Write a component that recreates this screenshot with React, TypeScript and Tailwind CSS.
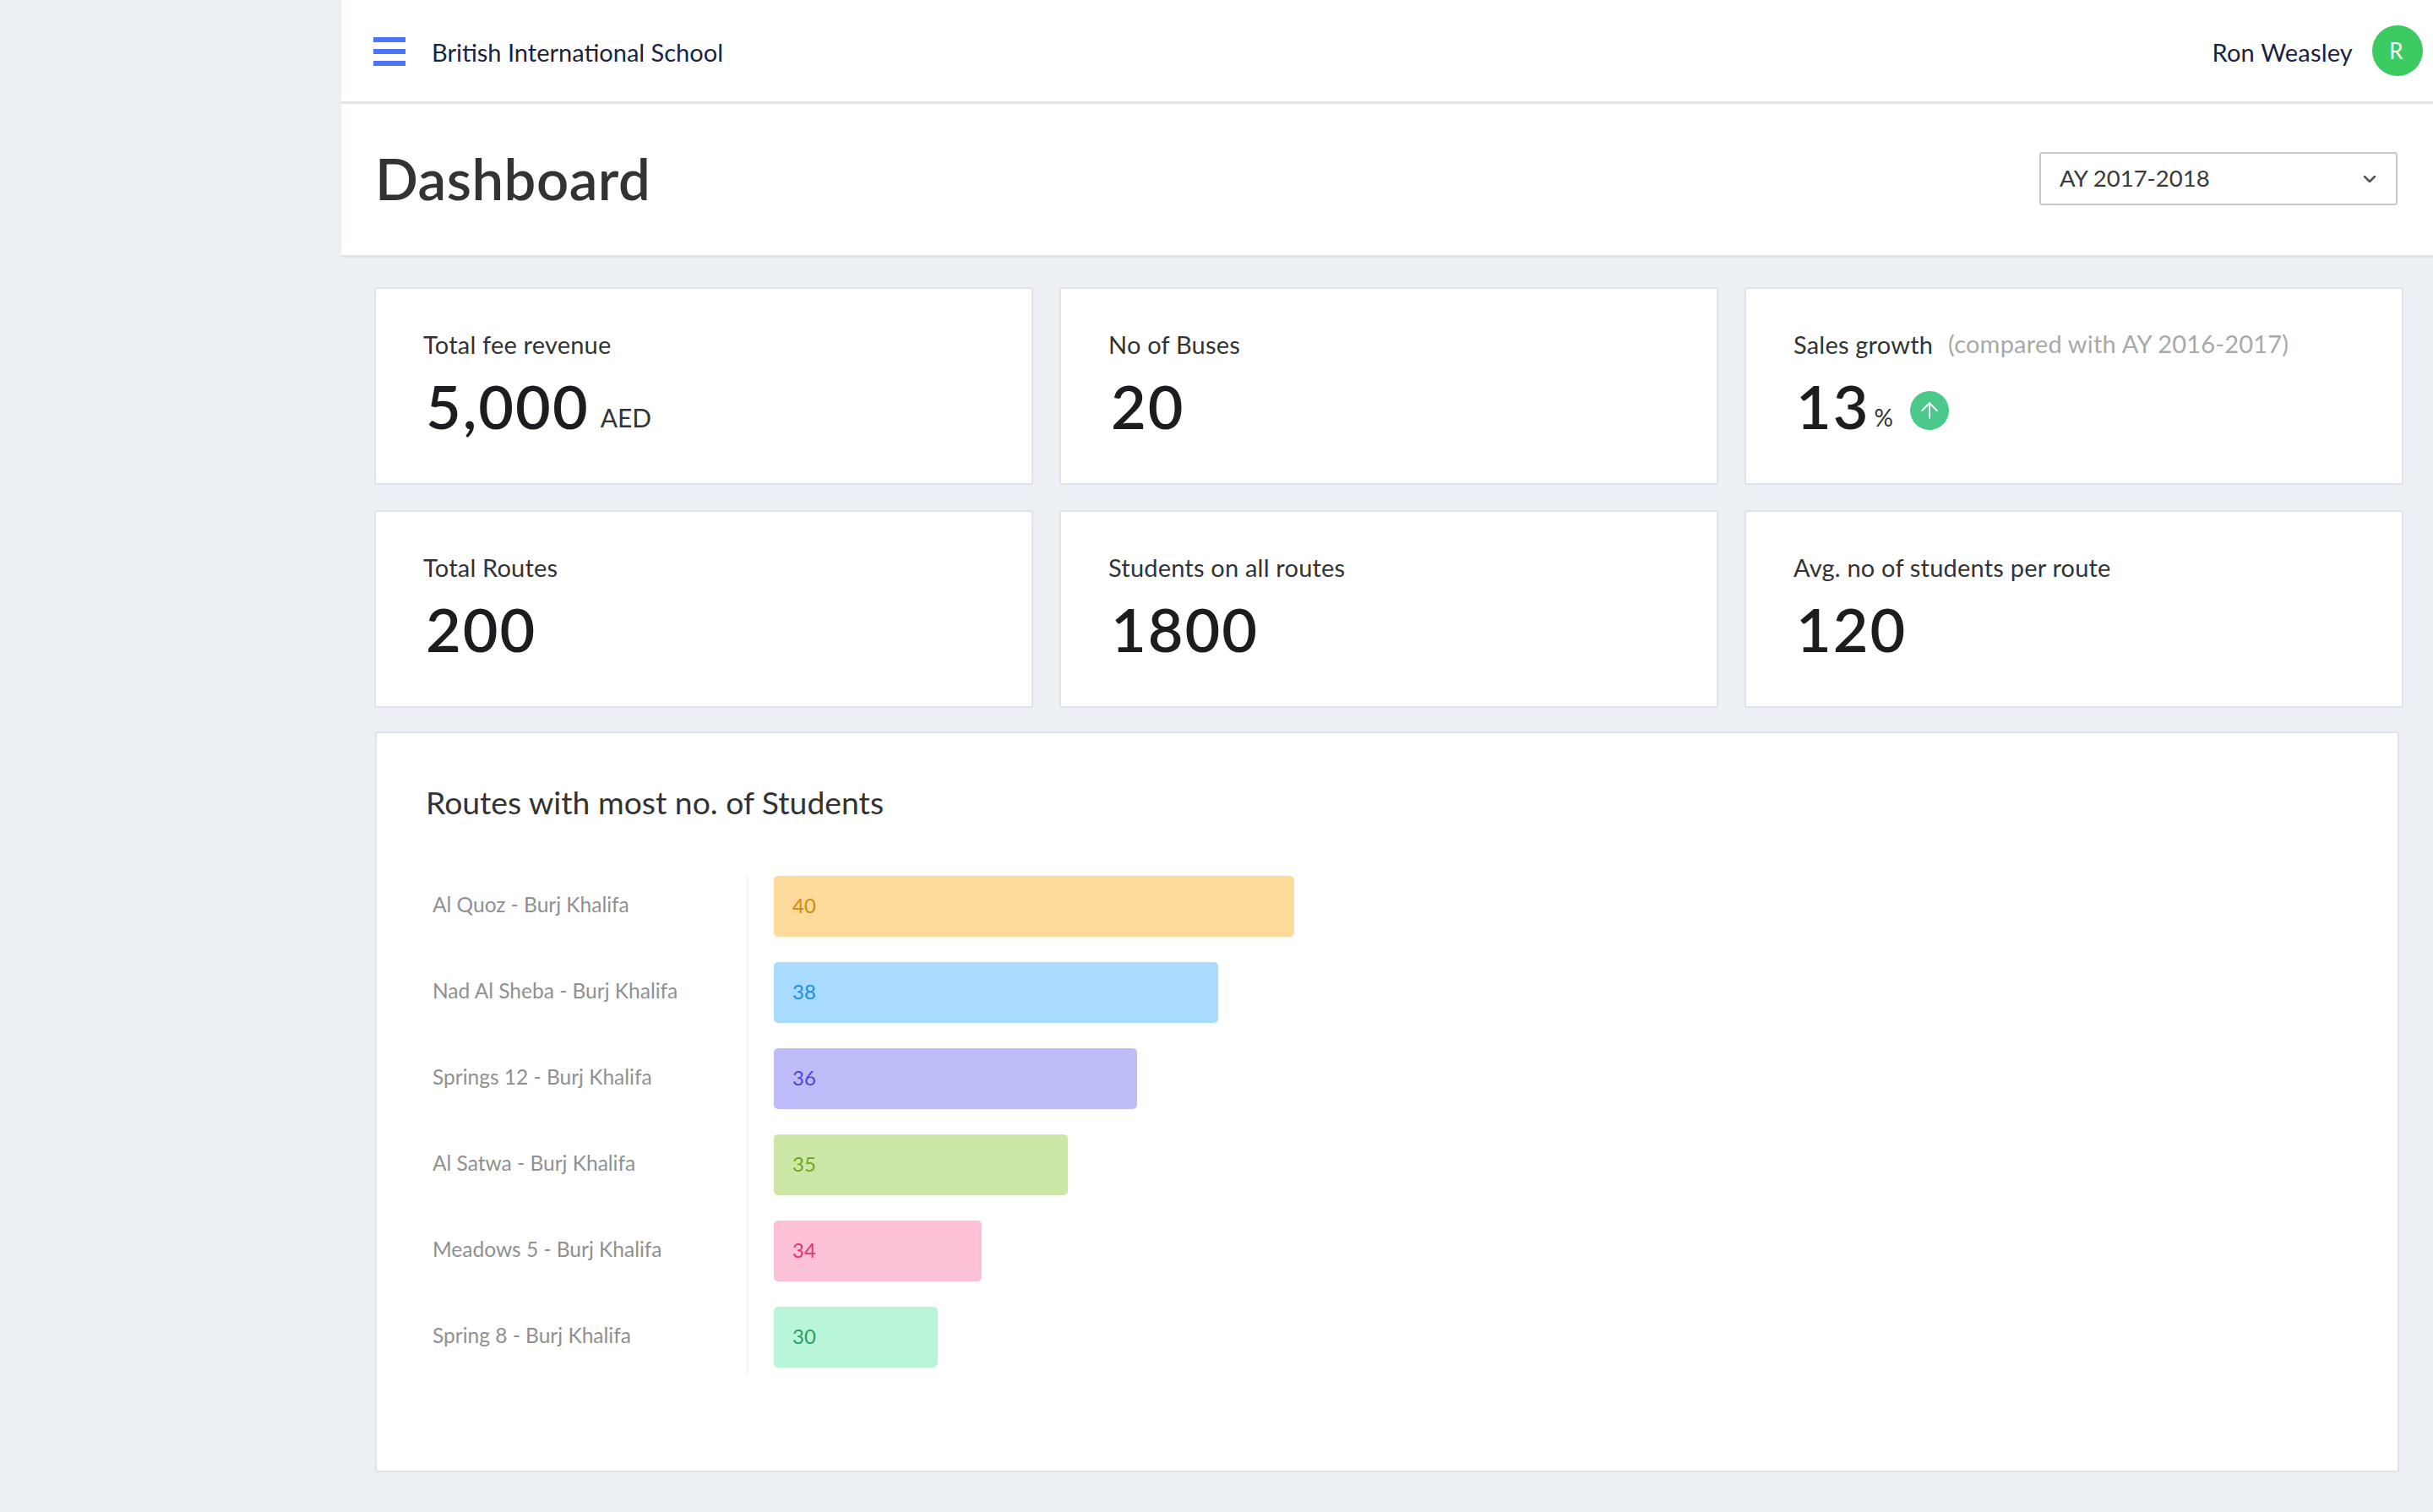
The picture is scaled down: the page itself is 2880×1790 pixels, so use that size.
import { ArrowUp, ChevronDown } from "lucide-react";

const routes = [
  { name: "Al Quoz - Burj Khalifa", value: 40, width: 616, bar: "bg-[#ffdb9b]", text: "text-[#d08a10]" },
  { name: "Nad Al Sheba - Burj Khalifa", value: 38, width: 526, bar: "bg-[#a8dbfd]", text: "text-[#1f8ee0]" },
  { name: "Springs 12 - Burj Khalifa", value: 36, width: 430, bar: "bg-[#bfbdf9]", text: "text-[#4a47e0]" },
  { name: "Al Satwa - Burj Khalifa", value: 35, width: 348, bar: "bg-[#cce7a6]", text: "text-[#6eab1e]" },
  { name: "Meadows 5 - Burj Khalifa", value: 34, width: 246, bar: "bg-[#fcc1d6]", text: "text-[#e0386e]" },
  { name: "Spring 8 - Burj Khalifa", value: 30, width: 194, bar: "bg-[#b9f6d9]", text: "text-[#2a9d68]" },
];

function StatCard({ label, note, value, children }: { label: string; note?: string; value: string; children?: React.ReactNode }) {
  return (
    <div className="h-[234px] rounded-[3px] border-2 border-[#dfe3ea] bg-white pl-[56px] pt-[48px]">
      <div className="flex h-[36px] items-center text-[29px] leading-[36px] tracking-[0.2px] text-[#333333]">
        <span>{label}</span>
        {note && <span className="ml-[18px] -translate-y-[1px] text-[#a9a9a9]">{note}</span>}
      </div>
      <div className="mt-[14px] flex h-[80px] items-end pl-[3px]">
        <span className="text-[72px] font-semibold leading-[80px] tracking-[2px] text-[#1c1d20]">{value}</span>
        {children}
      </div>
    </div>
  );
}

export default function App() {
  return (
    <div className="flex min-h-[1790px] bg-[#ecf0f5] font-['Lato',sans-serif]">
      <aside className="w-[404px] shrink-0" />
      <main className="min-w-0 flex-1">
        <header className="flex h-[123px] items-center justify-between border-b-[3px] border-[#e1e5ea] bg-white pl-[38px] pr-[12px]">
          <div className="flex items-center">
            <div className="mt-[2px] flex w-[38px] flex-col gap-[8px]">
              <span className="h-[6px] bg-[#4a76f5]" />
              <span className="h-[6px] bg-[#4a76f5]" />
              <span className="h-[6px] bg-[#4a76f5]" />
            </div>
            <span className="ml-[31px] mt-[4px] text-[29px] text-[#1a2340]">British International School</span>
          </div>
          <div className="flex items-center">
            <span className="mt-[4px] text-[29px] tracking-[0.2px] text-[#1a2340]">Ron Weasley</span>
            <span className="ml-[23px] flex h-[60px] w-[60px] items-center justify-center rounded-full bg-[#3ccb60] pr-[3px] text-[26px] text-white">R</span>
          </div>
        </header>

        <div className="flex h-[182px] items-center justify-between border-b-[3px] border-[#e1e5ea] bg-white pb-[3px] pl-[40px] pr-[42px]">
          <h1 className="text-[67px] font-semibold tracking-[0.5px] text-[#333333]">Dashboard</h1>
          <div className="flex h-[63px] w-[424px] items-center justify-between rounded-[3px] border-2 border-[#c5c9d3] pl-[22px] pr-[19px] text-[27.5px] text-[#3a3a3a]">
            <span>AY 2017-2018</span>
            <ChevronDown size={24} strokeWidth={2.5} className="mt-[1px] text-[#555555]" />
          </div>
        </div>

        <div className="pl-[39px] pr-[35px] pt-[35px]">
          <div className="grid grid-cols-3 gap-x-[31px] gap-y-[30px]">
            <StatCard label="Total fee revenue" value="5,000">
              <span className="mb-[8px] ml-[13px] text-[30px] leading-[36px] text-[#333333]">AED</span>
            </StatCard>
            <StatCard label="No of Buses" value="20" />
            <StatCard label="Sales growth" note="(compared with AY 2016-2017)" value="13">
              <span className="mb-[11px] ml-[5px] text-[28px] leading-[30px] text-[#333333]">%</span>
              <span className="mb-[11px] ml-[20px] flex h-[46px] w-[46px] items-center justify-center rounded-full bg-[#4bc98a] text-white">
                <ArrowUp size={30} strokeWidth={1.5} />
              </span>
            </StatCard>
            <StatCard label="Total Routes" value="200" />
            <StatCard label="Students on all routes" value="1800" />
            <StatCard label="Avg. no of students per route" value="120" />
          </div>

          <section className="ml-[1px] mr-[5px] mt-[28px] h-[877px] rounded-[3px] border-2 border-[#dfe3ea] bg-white pl-[58px] pt-[60px]">
            <h2 className="text-[37.3px] leading-[44px] text-[#333333]">Routes with most no. of Students</h2>
            <div className="mt-[65px] flex">
              <div className="w-[382px] shrink-0 border-r-2 border-[#f0f2f5] pl-[8px]">
                {routes.map((route) => (
                  <div key={route.name} className="mb-[30px] flex h-[72px] items-center pb-[4px] text-[24.5px] text-[#909090] last:mb-[8px]">
                    {route.name}
                  </div>
                ))}
              </div>
              <div className="pl-[30px]">
                {routes.map((route) => (
                  <div
                    key={route.name}
                    className={`mb-[30px] flex h-[72px] items-center rounded-[5px] pb-[2px] pl-[22px] text-[24px] last:mb-0 ${route.bar} ${route.text}`}
                    style={{ width: route.width }}
                  >
                    {route.value}
                  </div>
                ))}
              </div>
            </div>
          </section>
        </div>
      </main>
    </div>
  );
}
